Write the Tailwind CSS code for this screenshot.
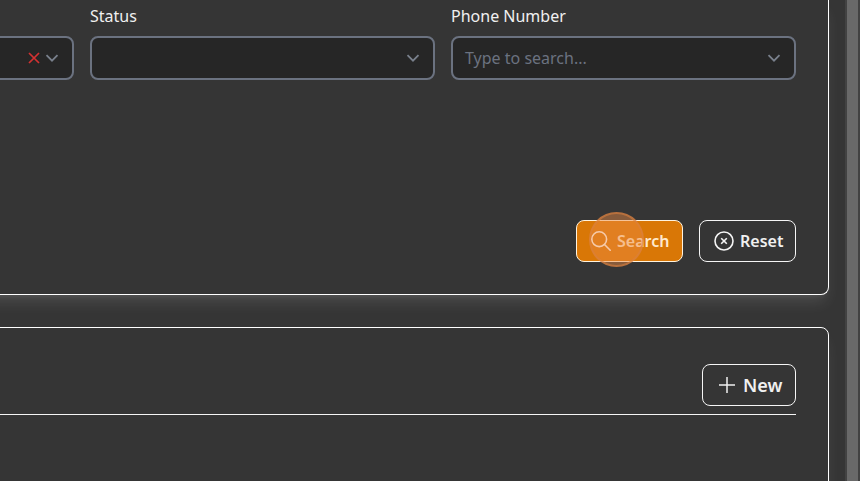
<!DOCTYPE html>
<html lang="en">
<head>
<meta charset="utf-8">
<title>Search</title>
<script src="https://cdn.jsdelivr.net/npm/@tailwindcss/browser@4"></script>
</head>
<body class="bg-[#353535] overflow-hidden">
<div class="flex h-[481px] w-[860px] justify-end overflow-hidden bg-[#353535] font-['Noto_Sans',sans-serif] text-base text-[#f0f0f0]">
  <main class="mr-4 flex w-[1133px] shrink-0 flex-col gap-8">
    <section class="flex h-[295px] shrink-0 flex-col justify-between rounded-b-lg border border-t-0 border-white bg-[#353535] px-8 pb-8 shadow-[0_10px_15px_-3px_rgba(255,255,255,0.11),0_4px_6px_-4px_rgba(255,255,255,0.11)]">
      <div class="grid grid-cols-[345px_345px_345px] gap-4 pt-1">
        <div class="flex flex-col gap-2">
          <div class="h-6"></div>
          <div class="flex h-11 items-center justify-end gap-[5px] rounded-lg border-2 border-[#6b7280] bg-[#262626] pr-3.5">
            <svg class="h-3 w-3" viewBox="0 0 12 12" fill="none" stroke="#d33131" stroke-width="1.7"><path d="M1 1l10 10M11 1L1 11"/></svg>
            <svg class="mr-[-1px] h-[14px] w-[14px]" viewBox="0 0 14 14" fill="none" stroke="#79808c" stroke-width="1.8"><path d="M1.5 4.2L7 9.700l5.500-5.500"/></svg>
          </div>
        </div>
        <div class="flex flex-col gap-2">
          <div class="h-6 leading-6">Status</div>
          <div class="flex h-11 items-center justify-end rounded-lg border-2 border-[#6b7280] bg-[#262626] pr-[13px]">
            <svg class="h-[14px] w-[14px]" viewBox="0 0 14 14" fill="none" stroke="#79808c" stroke-width="1.8"><path d="M1.500 4.200L7 9.700l5.500-5.500"/></svg>
          </div>
        </div>
        <div class="flex flex-col gap-2">
          <div class="h-6 leading-6">Phone Number</div>
          <div class="flex h-11 items-center justify-between rounded-lg border-2 border-[#6b7280] bg-[#262626] pl-3 pr-[13px] text-[#6b7280]">
            <span>Type to search...</span>
            <svg class="h-[14px] w-[14px]" viewBox="0 0 14 14" fill="none" stroke="#79808c" stroke-width="1.8"><path d="M1.500 4.200L7 9.700l5.500-5.500"/></svg>
          </div>
        </div>
      </div>
      <div class="flex justify-end gap-4 font-semibold">
        <div class="relative flex h-[42px] w-[107px] items-center gap-1.5 rounded-lg border border-[#fff3df] bg-[#d97706] pl-3.5">
          <svg class="h-5 w-5" viewBox="0 0 20 20" fill="none" stroke="#fff" stroke-width="1.6" stroke-linecap="round"><circle cx="8.200" cy="8.200" r="7.400"/><path d="M13.500 13.500l5.700 5.700"/></svg>
          <span class="text-[#ffe9cc]">Search</span>
          <div class="absolute left-[12px] top-[-9px] h-[55px] w-[55px] rounded-full border-2 border-[#d9803f]/60 bg-[#eb8a42]/45"></div>
        </div>
        <div class="flex h-[42px] w-[97px] items-center gap-1.5 rounded-lg border border-[#f5f5f5] pl-3.5">
          <svg class="h-5 w-5" viewBox="0 0 20 20" fill="none" stroke="#f5f5f5" stroke-width="1.600"><circle cx="10" cy="10" r="9"/><path d="M7.200 7.200l5.600 5.600M12.800 7.200l-5.600 5.600"/></svg>
          <span>Reset</span>
        </div>
      </div>
    </section>
    <section class="h-[200px] shrink-0 rounded-t-lg border border-white bg-[#353535] px-8 pt-9 shadow-[0_10px_15px_-3px_rgba(255,255,255,0.1)]">
      <div class="flex justify-end border-b border-[#f5f5f5] pb-2">
        <div class="flex h-[42px] w-[94px] items-center gap-2 rounded-lg border border-[#f5f5f5] pl-4 text-lg font-semibold">
          <svg class="h-4 w-4" viewBox="0 0 16 16" fill="none" stroke="#f0f0f0" stroke-width="1.500"><path d="M8 0v16M0 8h16"/></svg>
          <span>New</span>
        </div>
      </div>
    </section>
  </main>
  <div class="w-[15px] shrink-0 border-l-2 border-r-2 border-[#424242] bg-[#696969]"></div>
</div>
</body>
</html>
